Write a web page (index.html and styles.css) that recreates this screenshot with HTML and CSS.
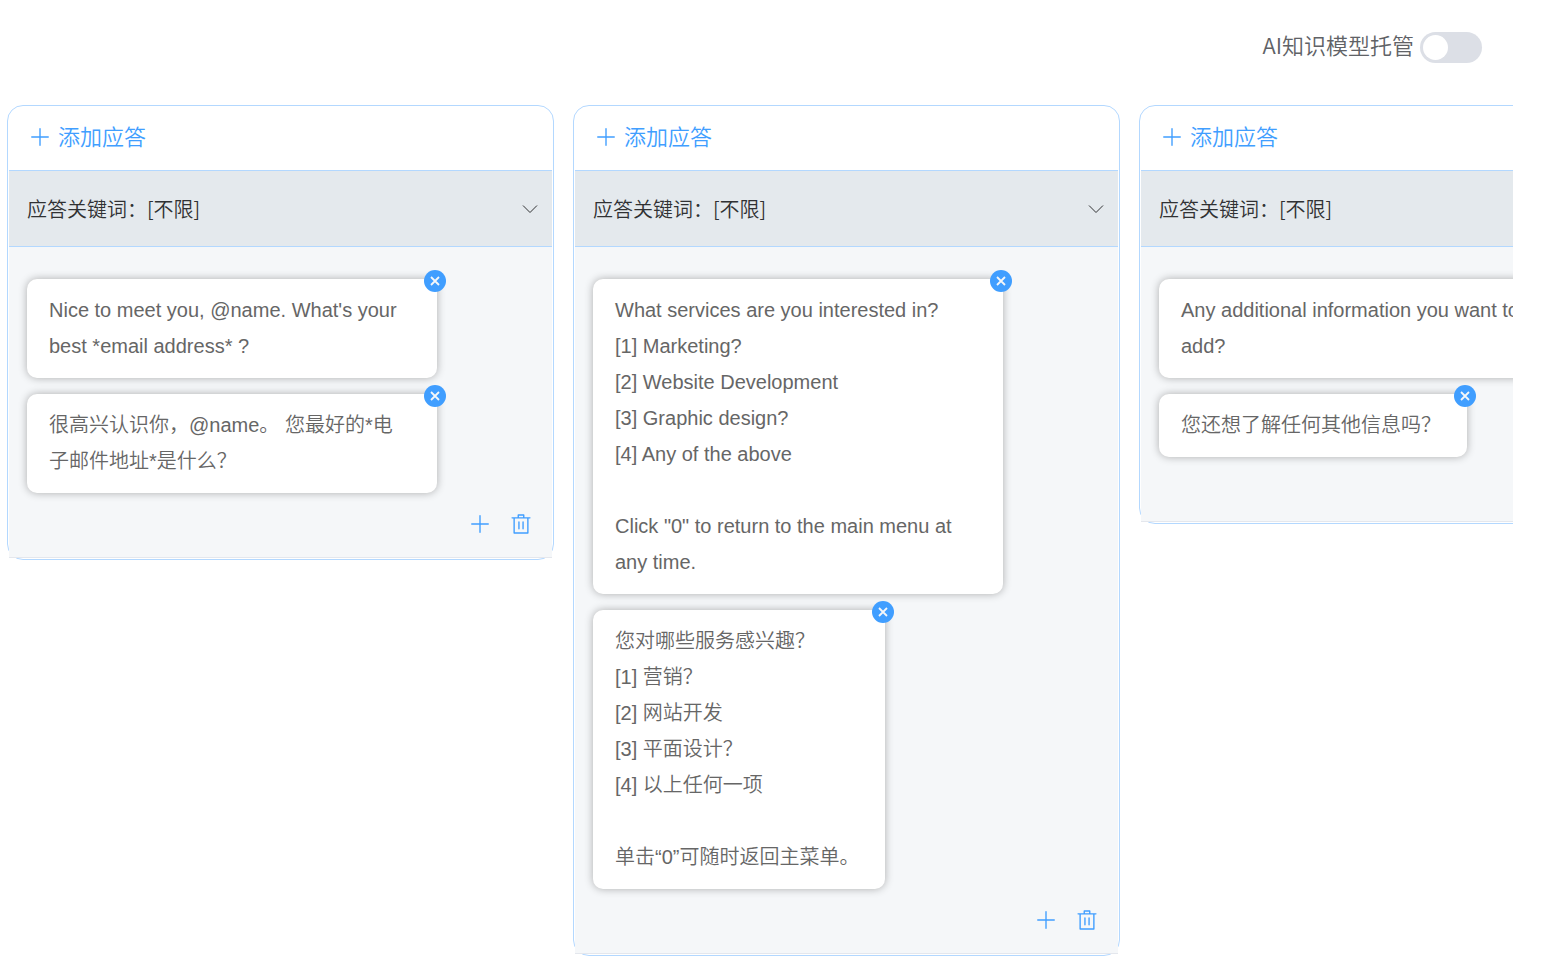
FILE: index.html
```html
<!DOCTYPE html>
<html lang="zh-CN">
<head>
<meta charset="utf-8">
<title>AI知识模型托管</title>
<link rel="stylesheet" href="styles.css">
</head>
<body>
<svg class="sprite" aria-hidden="true">
  <symbol id="plus" viewBox="0 0 1024 1024"><path d="M480 480V128a32 32 0 0 1 64 0v352h352a32 32 0 1 1 0 64H544v352a32 32 0 1 1-64 0V544H128a32 32 0 0 1 0-64h352z"/></symbol>
  <symbol id="trash" viewBox="0 0 1024 1024"><path d="M160 256H96a32 32 0 0 1 0-64h256V95.936a32 32 0 0 1 32-32h256a32 32 0 0 1 32 32V192h256a32 32 0 1 1 0 64h-64v672a32 32 0 0 1-32 32H192a32 32 0 0 1-32-32V256zm448-64v-64H416v64h192zM224 896h576V256H224v640zm192-128a32 32 0 0 1-32-32V416a32 32 0 0 1 64 0v320a32 32 0 0 1-32 32zm192 0a32 32 0 0 1-32-32V416a32 32 0 0 1 64 0v320a32 32 0 0 1-32 32z"/></symbol>
  <symbol id="close" viewBox="0 0 12 12"><path d="M2 2l8 8M10 2l-8 8" fill="none" stroke="currentColor" stroke-width="1.8"/></symbol>
  <symbol id="down" viewBox="0 0 16 16"><path d="M1 4.5l7 7 7-7" fill="none" stroke="currentColor" stroke-width="1"/></symbol>
</svg>

<header class="topbar">
  <label class="topbar-label" for="hosting">AI知识模型托管</label>
  <input class="switch" id="hosting" type="checkbox" role="switch">
</header>

<main class="board">
  <section class="card">
    <div class="card-head"><button class="add" type="button"><svg class="icon"><use href="#plus"/></svg>添加应答</button></div>
    <button class="keyword" type="button"><span>应答关键词：[不限]</span><svg class="arrow"><use href="#down"/></svg></button>
    <div class="card-body">
      <article class="message">Nice to meet you, @name. What's your best *email address* ?<button class="remove" type="button" aria-label="移除"><svg><use href="#close"/></svg></button></article>
      <article class="message">很高兴认识你，@name。 您最好的*电子邮件地址*是什么？<button class="remove" type="button" aria-label="移除"><svg><use href="#close"/></svg></button></article>
      <div class="actions">
        <button type="button" aria-label="添加"><svg class="icon"><use href="#plus"/></svg></button>
        <button type="button" aria-label="删除"><svg class="icon"><use href="#trash"/></svg></button>
      </div>
    </div>
  </section>

  <section class="card">
    <div class="card-head"><button class="add" type="button"><svg class="icon"><use href="#plus"/></svg>添加应答</button></div>
    <button class="keyword" type="button"><span>应答关键词：[不限]</span><svg class="arrow"><use href="#down"/></svg></button>
    <div class="card-body">
      <article class="message">What services are you interested in?
[1] Marketing?
[2] Website Development
[3] Graphic design?
[4] Any of the above

Click "0" to return to the main menu at any time.<button class="remove" type="button" aria-label="移除"><svg><use href="#close"/></svg></button></article>
      <article class="message">您对哪些服务感兴趣？
[1] 营销？
[2] 网站开发
[3] 平面设计？
[4] 以上任何一项

单击“0”可随时返回主菜单。<button class="remove" type="button" aria-label="移除"><svg><use href="#close"/></svg></button></article>
      <div class="actions">
        <button type="button" aria-label="添加"><svg class="icon"><use href="#plus"/></svg></button>
        <button type="button" aria-label="删除"><svg class="icon"><use href="#trash"/></svg></button>
      </div>
    </div>
  </section>

  <section class="card">
    <div class="card-head"><button class="add" type="button"><svg class="icon"><use href="#plus"/></svg>添加应答</button></div>
    <button class="keyword" type="button"><span>应答关键词：[不限]</span><svg class="arrow"><use href="#down"/></svg></button>
    <div class="card-body">
      <article class="message">Any additional information you want to add?<button class="remove" type="button" aria-label="移除"><svg><use href="#close"/></svg></button></article>
      <article class="message">您还想了解任何其他信息吗？<button class="remove" type="button" aria-label="移除"><svg><use href="#close"/></svg></button></article>
      <div class="actions">
        <button type="button" aria-label="添加"><svg class="icon"><use href="#plus"/></svg></button>
        <button type="button" aria-label="删除"><svg class="icon"><use href="#trash"/></svg></button>
      </div>
    </div>
  </section>
</main>
</body>
</html>
```

FILE: styles.css
```css
* {
  box-sizing: border-box;
}

body {
  margin: 0;
  background: #fff;
  color: #606266;
  font-family: "Noto Sans CJK SC", sans-serif;
  font-size: 20px;
  font-weight: 350;
}

button {
  margin: 0;
  padding: 0;
  border: 0;
  background: none;
  font: inherit;
  color: inherit;
  cursor: pointer;
}

svg {
  display: block;
}

.sprite {
  display: none;
}

.icon {
  width: 22px;
  height: 22px;
  fill: currentColor;
}

.topbar {
  display: flex;
  justify-content: flex-end;
  align-items: flex-start;
  gap: 6px;
  padding: 28px 68px 0 8px;
}

.topbar-label {
  font-size: 22px;
  line-height: 32px;
}

.switch {
  appearance: none;
  display: flex;
  align-items: center;
  width: 62px;
  height: 31px;
  margin: 4px 0 0;
  padding: 3px;
  border-radius: 16px;
  background: #dcdfe6;
  cursor: pointer;
}

.switch::before {
  content: "";
  width: 25px;
  height: 25px;
  border-radius: 50%;
  background: #fff;
}

.switch:checked {
  justify-content: flex-end;
  background: #409eff;
}

.board {
  display: flex;
  align-items: flex-start;
  gap: 19px;
  margin: 42px 37px 0 7px;
  padding-bottom: 16px;
  overflow-x: auto;
  scrollbar-width: none;
}

.card {
  flex: 0 0 547px;
  padding: 1px;
  border: 1px solid #b3d8ff;
  border-radius: 16px;
}

.card-head {
  display: flex;
  align-items: center;
  height: 63px;
  padding: 0 20px 8px;
}

.add {
  display: flex;
  align-items: flex-end;
  gap: 7px;
  color: #409eff;
  font-size: 22px;
  line-height: 26px;
}

.keyword {
  display: flex;
  justify-content: space-between;
  align-items: center;
  width: 100%;
  height: 77px;
  padding: 0 14px 0 18px;
  border-top: 1px solid #b3d8ff;
  border-bottom: 1px solid #b3d8ff;
  background: #e4e9ed;
  color: #303133;
  text-align: left;
}

.arrow {
  width: 16px;
  height: 16px;
}

.card-body {
  display: flex;
  flex-direction: column;
  align-items: flex-start;
  gap: 16px;
  padding: 32px 18px 20px;
  border-bottom: 1px solid #e4e7ed;
  background: #f5f7f9;
}

.message {
  position: relative;
  max-width: 410px;
  padding: 13px 26px 14px 22px;
  border-radius: 10px;
  background: #fff;
  box-shadow: 0 0 8px rgba(0, 0, 0, 0.3);
  color: #666;
  font-family: "Liberation Sans", "Noto Sans CJK SC", sans-serif;
  line-height: 36px;
  white-space: pre-wrap;
}

.remove {
  position: absolute;
  top: -9px;
  right: -9px;
  display: flex;
  align-items: center;
  justify-content: center;
  width: 22px;
  height: 22px;
  border-radius: 50%;
  background: #409eff;
  color: #f5f7f9;
}

.remove svg {
  width: 12px;
  height: 12px;
}

.actions {
  display: flex;
  align-self: flex-end;
  gap: 19px;
  padding: 4px 2px 2px;
  color: #409eff;
}
```
